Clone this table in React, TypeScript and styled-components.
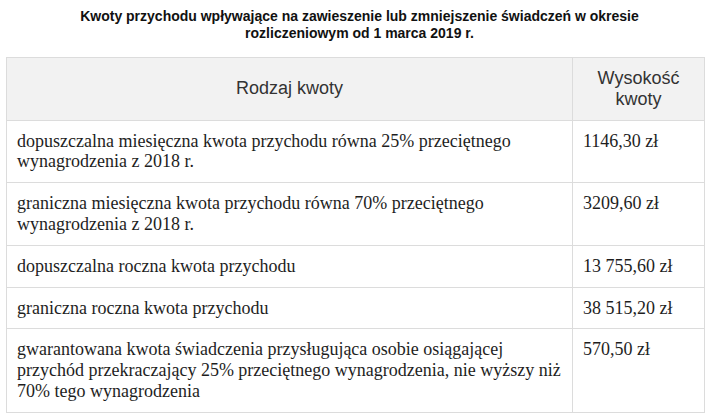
import React from "react";
import styled, { createGlobalStyle } from "styled-components";

const Global = createGlobalStyle`
  html, body { margin: 0; padding: 0; background: #ffffff; }
  body { font-family: "Liberation Serif", "Times New Roman", serif; }
`;

const Page = styled.div`
  width: 719px;
  padding: 8px 0 0 6px;
  box-sizing: border-box;
`;

const Title = styled.p`
  margin: 0 0 15px -6px;
  width: 719px;
  text-align: center;
  font-family: "Liberation Sans", Arial, sans-serif;
  font-weight: bold;
  font-size: 14px;
  line-height: 17px;
  color: #111;
  padding: 0 70px;
  box-sizing: border-box;
`;

const Table = styled.table`
  width: 698px;
  table-layout: fixed;
  border-collapse: collapse;
  border: 1px solid #dcdcdc;
`;

const Col = styled.col<{ $w: number }>`
  width: ${(p) => p.$w}px;
`;

const HeadCell = styled.th`
  background: #f2f2f2;
  border: 1px solid #dcdcdc;
  padding: 10px 10px;
  font-family: "Liberation Sans", Arial, sans-serif;
  font-weight: normal;
  font-size: 18px;
  line-height: 20.8px;
  color: #333;
  text-align: center;
  vertical-align: middle;
`;

const Cell = styled.td`
  border: 1px solid #dcdcdc;
  padding: 10px 10px;
  font-family: "Liberation Serif", "Times New Roman", serif;
  font-size: 18px;
  line-height: 20.8px;
  color: #1e1e1e;
  text-align: left;
  vertical-align: top;
`;

const rows: [string, string][] = [
  ["dopuszczalna miesięczna kwota przychodu równa 25% przeciętnego wynagrodzenia z 2018 r.", "1146,30 zł"],
  ["graniczna miesięczna kwota przychodu równa 70% przeciętnego wynagrodzenia z 2018 r.", "3209,60 zł"],
  ["dopuszczalna roczna kwota przychodu", "13 755,60 zł"],
  ["graniczna roczna kwota przychodu", "38 515,20 zł"],
  [
    "gwarantowana kwota świadczenia przysługująca osobie osiągającej przychód przekraczający 25% przeciętnego wynagrodzenia, nie wyższy niż 70% tego wynagrodzenia",
    "570,50 zł",
  ],
];

export default function App() {
  return (
    <Page>
      <Global />
      <Title>
        Kwoty przychodu wpływające na zawieszenie lub zmniejszenie świadczeń w okresie rozliczeniowym od 1 marca 2019 r.
      </Title>
      <Table>
        <colgroup>
          <Col $w={566} />
          <Col $w={132} />
        </colgroup>
        <thead>
          <tr>
            <HeadCell>Rodzaj kwoty</HeadCell>
            <HeadCell>Wysokość kwoty</HeadCell>
          </tr>
        </thead>
        <tbody>
          {rows.map(([a, b]) => (
            <tr key={a}>
              <Cell>{a}</Cell>
              <Cell>{b}</Cell>
            </tr>
          ))}
        </tbody>
      </Table>
    </Page>
  );
}
